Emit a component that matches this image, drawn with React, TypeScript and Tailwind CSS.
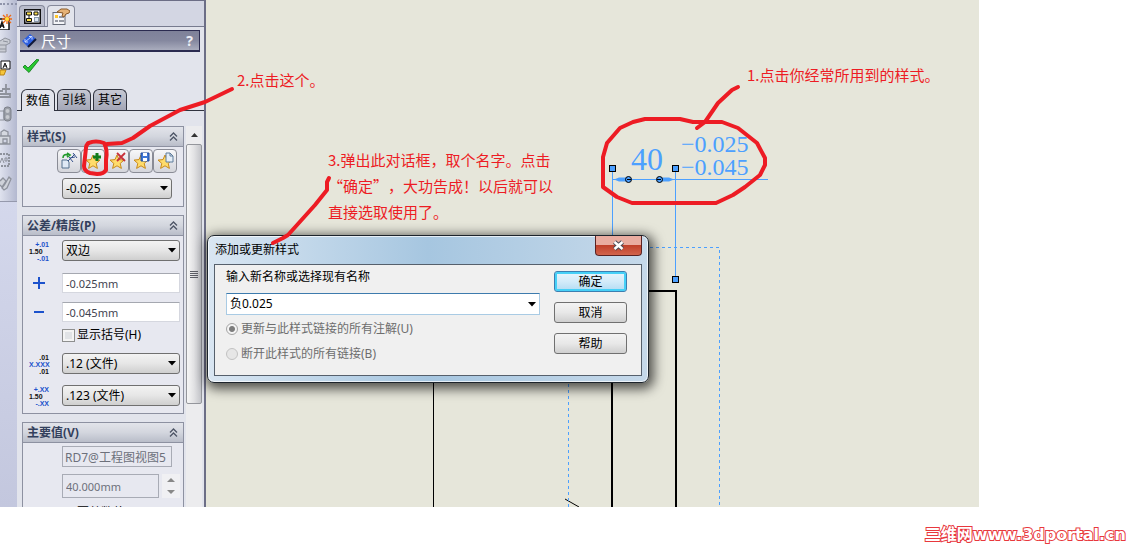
import { useState } from 'react';
import type { ReactNode } from 'react';
import { clsx } from 'clsx';

const STAR = 'M8 2l2 4.6 5 .5-3.8 3.3 1.2 5L8 12.8l-4.4 2.6 1.2-5L1 7.1l5-.5z';

function Star() {
  return <path d={STAR} fill="#ffdc6b" stroke="#c88a1c" strokeWidth="1" />;
}

function Arrow() {
  return (
    <svg width="8" height="5" viewBox="0 0 8 5" className="pointer-events-none">
      <path d="M0 0h8L4 4.5z" fill="#000" />
    </svg>
  );
}

function Chevrons() {
  return (
    <svg width="9" height="9" viewBox="0 0 9 9" fill="none" stroke="#4d5566" strokeWidth="1.3">
      <path d="M1 4.5l3.5-3.5L8 4.5M1 8.5L4.5 5 8 8.5" />
    </svg>
  );
}

function Select({ label, options, className }: { label: string; options: string[]; className?: string }) {
  return (
    <div className={clsx('relative', className)}>
      <select
        aria-label={label}
        className="block h-[21px] w-full appearance-none rounded-[3px] border border-[#707070] bg-linear-to-b from-[#f3f3f3] via-[#e6e6e6] to-[#cfcfcf] pl-[3px] text-[12px] leading-[18px] text-black"
      >
        {options.map((o) => (
          <option key={o}>{o}</option>
        ))}
      </select>
      <span className="pointer-events-none absolute inset-y-0 right-1 flex items-center">
        <Arrow />
      </span>
    </div>
  );
}

function Section({ title, children }: { title: string; children: ReactNode }) {
  return (
    <section className="border border-[#8d91a1] bg-[#e7e8f0]">
      <h2 className="flex h-5 items-center justify-between border-b border-[#8d91a1] bg-linear-to-b from-[#e2e4ea] via-[#d3d6de] to-[#b9bdc9] pl-1 pr-[5px] text-[12px] font-bold text-[#33405c]">
        {title}
        <button type="button" aria-label={`收起 ${title}`}>
          <Chevrons />
        </button>
      </h2>
      {children}
    </section>
  );
}

function Row({ icon, children }: { icon?: ReactNode; children: ReactNode }) {
  return (
    <div className="flex items-center pr-[3px]">
      <div className="flex w-[39px] shrink-0 items-center justify-center pr-2">{icon}</div>
      {children}
    </div>
  );
}

function ToleranceIcon({ top, mid, bottom, blueMid }: { top: string; mid: string; bottom: string; blueMid?: boolean }) {
  return (
    <svg width="20" height="20" viewBox="0 0 20 20" className="overflow-visible font-['Liberation_Sans',sans-serif] text-[7px] font-bold">
      <text x="20" y="6" textAnchor="end" fill={blueMid ? '#111' : '#1c52cc'}>{top}</text>
      <text x="0" y="13" fill={blueMid ? '#1c52cc' : '#111'}>{mid}</text>
      <text x="20" y="20" textAnchor="end" fill={blueMid ? '#111' : '#1c52cc'}>{bottom}</text>
    </svg>
  );
}

const styleButtons = [
  {
    label: '应用默认属性',
    icon: (
      <>
        <path d="M1 7h5l2 2v6H1z" fill="#dfe9f5" stroke="#55718d" />
        <path d="M2 5c0-3 2-4 5-3M6 0l3 2-3 2" fill="none" stroke="#249a2c" strokeWidth="1.6" />
        <path d="M7 8l7-7M8 4l4 5M12 0l4 5M9 5l5-1" fill="none" stroke="#36538c" />
      </>
    ),
  },
  {
    label: '添加或更新样式',
    icon: (
      <>
        <Star />
        <path d="M12 0v8M8 4h8" stroke="#137d1b" strokeWidth="3" />
      </>
    ),
  },
  {
    label: '删除样式',
    icon: (
      <>
        <Star />
        <path d="M8 0l8 8M16 0L8 8" stroke="#c8303a" strokeWidth="1.8" />
      </>
    ),
  },
  {
    label: '保存样式',
    icon: (
      <>
        <Star />
        <path d="M8 0h8v8H8z" fill="#3f76d6" stroke="#234c9c" />
        <path d="M10 0h4v3h-4zM10 5h4v3h-4z" fill="#fff" />
      </>
    ),
  },
  {
    label: '装入样式',
    icon: (
      <>
        <Star />
        <path d="M9 0h4l3 3v6H9z" fill="#e4edf7" stroke="#5f7c9b" />
        <path d="M13 0v3h3" fill="none" stroke="#5f7c9b" />
      </>
    ),
  },
];

const tools = [
  {
    label: '注释',
    icon: (
      <>
        <path d="M0 5h9v11H0" fill="#fff" stroke="#111" strokeWidth="1.5" />
        <path d="M0 14l2-6 2 6M0 12h4" fill="none" stroke="#111" strokeWidth="1.5" />
        <path d="M7 0v10M2 5h10M3 1l8 8M11 1L3 9" stroke="#ef6a16" strokeWidth="1.3" />
        <circle cx="7" cy="5" r="2" fill="#ffe23a" />
      </>
    ),
  },
  {
    label: '线性注释',
    icon: (
      <>
        <path d="M0 4l5-3 5 2v3L6 8v7H0" fill="#c9ccd4" stroke="#8e929c" />
        <path d="M0 8h6M0 12h6M3 4l5 1" stroke="#8e929c" />
      </>
    ),
  },
  {
    label: '格式',
    icon: (
      <>
        <path d="M1 1h9v8H1z" fill="#fff" stroke="#111" />
        <path d="M3 8l2-5 2 5M4 6h3" fill="none" stroke="#111" />
        <path d="M0 10h6l-2 5H0z" fill="#f6c63b" stroke="#b98416" />
      </>
    ),
  },
  {
    label: '基准',
    icon: <path d="M6 1v10M2 6h8M0 11h10v3H0M0 8h3" fill="none" stroke="#8e929c" strokeWidth="1.8" />,
  },
  {
    label: '交通灯',
    icon: (
      <>
        <path d="M0 5h4v9H0" fill="none" stroke="#8e929c" />
        <rect x="4" y="1" width="7" height="14" rx="3" fill="#9a9ea7" stroke="#7d818b" />
        <circle cx="7.5" cy="5" r="2" fill="#c6c9cf" />
        <circle cx="7.5" cy="11" r="2" fill="#c6c9cf" />
      </>
    ),
  },
  {
    label: '形位公差',
    icon: <path d="M0 7h10v8H0M1 7V3l3-2 4 2v4M3 10v4h4v-4z" fill="#d5d8df" stroke="#8e929c" strokeWidth="1.3" />,
  },
  {
    label: '区域',
    icon: (
      <>
        <path d="M0 2h9v12H0" fill="none" stroke="#8e929c" strokeWidth="2" strokeDasharray="2 1" />
        <path d="M0 11l2-5 2 5M5 6h2v3H5z" fill="none" stroke="#8e929c" />
      </>
    ),
  },
  {
    label: '链接',
    icon: (
      <path d="M0 6l3-3 3 3-4 6-2-2M5 9l4-7 2 2-4 9-3 2-2-2z" fill="#cfd2d9" stroke="#8e929c" strokeWidth="1.3" />
    ),
  },
];

function Toolbar() {
  return (
    <aside className="w-[17px] shrink-0 bg-linear-to-b from-[#dfe3f5] to-[#c3c7de]">
      <div className="flex flex-col gap-[7px] border-b border-[#9599ac] bg-linear-to-r from-[#dfe2ee] to-[#b3b8cf] pb-[10px]">
        <div className="h-[5px] border-b-2 border-dotted border-[#8f94aa]" />
        {tools.map((t) => (
          <button key={t.label} type="button" aria-label={t.label} className="h-4 w-3 first-of-type:mt-0.5">
            <svg width="12" height="16" viewBox="0 0 12 16">
              {t.icon}
            </svg>
          </button>
        ))}
      </div>
    </aside>
  );
}

const valueTabs = ['数值', '引线', '其它'];

function PropertyPanel() {
  const [tab, setTab] = useState('数值');

  return (
    <aside className="flex w-[189px] shrink-0 flex-col border-r-2 border-t border-[#6c6e86] bg-[#e2e4ec]">
      {/* manager tabs */}
      <div className="flex h-[26px] shrink-0 items-end gap-0.5 border-b border-[#777b8f] bg-[#d3d6e3] pl-0.5">
        <button type="button" aria-label="特征树" className="flex h-[21px] w-[26px] items-center justify-center rounded-t-[4px] border border-b-0 border-[#85899b] bg-[#b9bccb]">
          <svg width="17" height="15" viewBox="0 0 17 15">
            <rect x="0.75" y="0.75" width="15.5" height="13.5" fill="#fff" stroke="#111" strokeWidth="1.5" />
            <path d="M2.5 3h5v3h-5zM10 3h4v3h-4zM5 6v4M2.5 9.500h5v3h-5z" fill="#ffe14a" stroke="#111" />
            <rect x="10.500" y="8.500" width="4" height="4" fill="#dce6f2" stroke="#8899aa" />
          </svg>
        </button>
        <button type="button" aria-label="属性" className="-mb-px flex h-[22px] w-7 items-center justify-center rounded-t-[4px] border border-b-0 border-[#85899b] bg-[#e2e4ec]">
          <svg width="18" height="17" viewBox="0 0 18 17">
            <rect x="1" y="4.500" width="12" height="12" fill="#f4f5f8" stroke="#666b78" />
            <rect x="3" y="7" width="3" height="3" fill="#ffc52b" />
            <path d="M7 9h5M7 13h5M3 13h3" stroke="#777b86" strokeWidth="1.5" />
            <path d="M5 4l4-3 6 0 3 2-1 2-3 1-2 3-2-1 1-3z" fill="#e5b277" stroke="#8a5a2a" />
          </svg>
        </button>
      </div>

      <div className="ml-[3px] mr-1 mt-[3px] flex h-[22px] shrink-0 items-center border-b-2 border-r border-t border-[#2b2b50] bg-linear-to-b from-[#7e8199] via-[#85889f] to-[#a9acbd] px-0.5">
        <svg width="15" height="15" viewBox="0 0 15 15">
          <path d="M0 8l8-7 6 5-8 8z" fill="#2d5fe0" />
          <path d="M6 14l8-8" stroke="#101838" strokeWidth="2" />
          <path d="M3 9l6-5M3 6v3h3M7 3.500h3v3" fill="none" stroke="#c4d4ff" />
        </svg>
        <h1 className="ml-1 flex-1 text-[15px] leading-[18px] text-white">尺寸</h1>
        <button type="button" className="pr-1 text-[14px] leading-[18px] font-bold text-[#eceef5]">?</button>
      </div>

      <button type="button" aria-label="确定并关闭" className="ml-[6px] mt-[7px] h-[14px] w-4">
        <svg width="16" height="14" viewBox="0 0 16 14">
          <path d="M0 8l2-2 3 3 9-9 2 1L6 13.500z" fill="#27c92f" stroke="#11761a" strokeWidth="0.8" />
        </svg>
      </button>

      <div className="mt-4 flex h-[22px] shrink-0 items-end gap-0.5 border-b border-[#30333f] pl-1" role="tablist">
        {valueTabs.map((t) => (
          <button
            key={t}
            type="button"
            role="tab"
            aria-selected={t === tab}
            onClick={() => setTab(t)}
            className={clsx(
              'w-[34px] rounded-t-[6px] border border-b-0 border-[#30333f] text-[12px] leading-5 text-black',
              t === tab ? '-mb-px h-[22px] bg-[#e2e4ec]' : 'h-[21px] bg-linear-to-b from-[#c7c9d3] to-[#a3a6b6]',
            )}
          >
            {t}
          </button>
        ))}
      </div>

      <div className="mt-[15px] flex min-h-0 flex-1 gap-[2px] overflow-hidden pl-[5px]">
        <div className="flex min-w-0 flex-1 flex-col gap-2">
          <Section title="样式(S)">
            <div className="flex justify-end pr-[6px] pt-[2px]">
              {styleButtons.map((b) => (
                <button
                  key={b.label}
                  type="button"
                  aria-label={b.label}
                  className="flex size-6 items-center justify-center rounded-[4px] border border-[#8a8c96] bg-linear-to-b from-[#f7f7f9] to-[#d4d5db]"
                >
                  <svg width="18" height="18" viewBox="-1 -1 18 18">
                    {b.icon}
                  </svg>
                </button>
              ))}
            </div>
            <div className="pb-[7px] pl-[39px] pr-[11px] pt-[5px]">
              <Select label="样式" options={['-0.025']} />
            </div>
          </Section>

          <Section title="公差/精度(P)">
            <div className="flex flex-col pb-[7px] pt-1">
              <Row icon={<ToleranceIcon top="+.01" mid="1.50" bottom="-.01" />}>
                <Select label="公差类型" options={['双边']} className="flex-1" />
              </Row>
              <div className="mt-3 flex flex-col gap-[9px]">
                <Row
                  icon={
                    <svg width="12" height="12" viewBox="0 0 12 12">
                      <path d="M6 0v12M0 6h12" stroke="#1c52cc" strokeWidth="2" />
                    </svg>
                  }
                >
                  <input aria-label="最大变量" defaultValue="-0.025mm" className="h-5 min-w-0 flex-1 border border-[#d5d7df] border-t-[#a5a8b0] bg-white px-[3px] text-[11px] text-[#3f4350]" />
                </Row>
                <Row
                  icon={
                    <svg width="12" height="12" viewBox="0 0 12 12">
                      <path d="M1 6h10" stroke="#1c52cc" strokeWidth="2" />
                    </svg>
                  }
                >
                  <input aria-label="最小变量" defaultValue="-0.045mm" className="h-5 min-w-0 flex-1 border border-[#d5d7df] border-t-[#a5a8b0] bg-white px-[3px] text-[11px] text-[#3f4350]" />
                </Row>
              </div>
              <label className="ml-[39px] mt-[6px] flex h-[14px] items-center gap-[2px] text-[12px] text-black">
                <input type="checkbox" className="size-[13px] appearance-none border border-[#8e8f8f] bg-[#e1e3e6] outline-2 -outline-offset-3 outline-[#f4f4f4]" />
                显示括号(H)
              </label>
              <div className="mt-[11px] flex flex-col gap-[11px]">
                <Row icon={<ToleranceIcon top=".01" mid="X.XXX" bottom=".01" blueMid />}>
                  <Select label="单位精度" options={['.12 (文件)']} className="flex-1" />
                </Row>
                <Row icon={<ToleranceIcon top="+.XX" mid="1.50" bottom="-.XX" />}>
                  <Select label="公差精度" options={['.123 (文件)']} className="flex-1" />
                </Row>
              </div>
            </div>
          </Section>

          <Section title="主要值(V)">
            <div className="flex flex-col pl-[39px] pr-[3px] pt-[3px]">
              <input aria-label="名称" disabled defaultValue="RD7@工程图视图5" className="mr-2 h-[21px] border border-[#a8abb5] bg-[#e7e8f0] px-0.5 text-[12px] text-[#6d707b]" />
              <div className="mt-[7px] flex gap-[3px]">
                <input aria-label="尺寸值" disabled defaultValue="40.000mm" className="h-6 min-w-0 flex-1 border border-[#a8abb5] bg-[#e7e8f0] px-[3px] text-[11px] text-[#6d707b]" />
                <div className="flex w-[18px] flex-col bg-[#f0f0f3]">
                  <button type="button" aria-label="增大" disabled className="flex flex-1 items-center justify-center">
                    <svg width="8" height="4" viewBox="0 0 8 4"><path d="M4 0l4 4H0z" fill="#888" /></svg>
                  </button>
                  <button type="button" aria-label="减小" disabled className="flex flex-1 items-center justify-center">
                    <svg width="8" height="4" viewBox="0 0 8 4"><path d="M0 0h8L4 4z" fill="#888" /></svg>
                  </button>
                </div>
              </div>
              <label className="mt-2 flex h-[14px] items-center gap-[2px] text-[12px] text-black">
                <input type="checkbox" className="size-[13px] appearance-none border border-[#8e8f8f] bg-[#e1e3e6]" />
                覆盖数值(O)
              </label>
            </div>
          </Section>
        </div>

        {/* scrollbar */}
        <div className="mr-[2px] flex w-[16px] flex-col bg-[#ececee]">
          <div className="flex h-[18px] items-center justify-center">
            <svg width="7" height="4" viewBox="0 0 7 4"><path d="M3.500 0L7 4H0z" fill="#333" /></svg>
          </div>
          <div className="flex h-[260px] flex-col items-center justify-center gap-[1px] rounded-[2px] border border-[#94969c] bg-linear-to-r from-[#f6f6f6] via-[#e2e2e4] to-[#c4c5ca]">
            {[0, 1, 2, 3].map((i) => (
              <span key={i} className="h-px w-2 bg-[#5c5e66]" />
            ))}
          </div>
        </div>
      </div>
    </aside>
  );
}

function Drawing() {
  return (
    <>
      <svg className="absolute inset-0 size-full" fill="none">
        <g stroke="#000">
          <path d="M433.500 380V507M565 499l14 8" />
          <path d="M612 380V507M649 291H676V507" strokeWidth="2" />
        </g>
        <g stroke="#4ca0ff">
          <path d="M568.500 384V507M650 247.500H719.500V507" strokeDasharray="3 3" />
          <path d="M612.500 168V240M675.500 168V280M612 179.500H768" />
        </g>
        <path d="M614 179.500l5-2h10v4h-10zM674 179.500l-5-2h-10v4h10z" fill="#4ca0ff" />
        <g fill="#4ca0ff" stroke="#000">
          <rect x="609.500" y="165.500" width="6" height="6" />
          <rect x="672.500" y="165.500" width="6" height="6" />
          <rect x="672.500" y="276.500" width="6" height="6" />
          <circle cx="628.500" cy="179.500" r="3" />
          <circle cx="659.500" cy="179.500" r="3" />
          <path d="M627 179.500h4M657 179.500h4" />
        </g>
      </svg>
      <div className="absolute left-[631px] top-[133px] flex items-end gap-[18px] text-[#4ca0ff] font-['Liberation_Serif',serif]">
        <span className="text-[32px] leading-[42px]">40</span>
        <p className="pb-px text-[24px] leading-[23px]">
          −0.025
          <br />
          −0.045
        </p>
      </div>
    </>
  );
}

const dialogButton = 'h-[21px] rounded-[3px] border text-[12px] leading-[19px] text-black';

function StyleDialog() {
  const [name, setName] = useState('负0.025');

  return (
    <div
      role="dialog"
      aria-labelledby="dialog-title"
      className="absolute left-[207px] top-[235px] w-[442px] rounded-[7px] border border-[#1d242c] bg-linear-to-r from-[#d9e6f2] via-[#a6c6e0] to-[#c6d9ea] px-[6px] pb-[6px] shadow-[2px_3px_12px_3px_rgba(0,0,0,0.65)] inset-ring inset-ring-white/70"
    >
      <div className="flex h-7 items-start justify-between">
        <h2 id="dialog-title" className="pl-px text-[12px] leading-[27px] text-black">添加或更新样式</h2>
        <button
          type="button"
          aria-label="关闭"
          className="flex h-5 w-[47px] items-center justify-center rounded-b-[4px] border border-t-0 border-[#5a2222] bg-linear-to-b from-[#e9aca0] from-45% via-[#c0402b] via-50% to-[#d2644c]"
        >
          <svg width="13" height="11" viewBox="0 0 13 11">
            <path d="M2.500 2l8 7M10.500 2l-8 7" stroke="#4a4a55" strokeWidth="4.500" />
            <path d="M2.500 2l8 7M10.500 2l-8 7" stroke="#fff" strokeWidth="2.500" />
          </svg>
        </button>
      </div>

      <div className="flex gap-[14px] border border-[#56606c] bg-[#f0f0f0] pb-[13px] pl-[11px] pr-[14px] pt-1">
        <div className="flex flex-1 flex-col">
          <label htmlFor="style-name" className="text-[12px] leading-4 text-black">输入新名称或选择现有名称</label>
          <div className="mt-2 flex h-[22px] items-center border border-[#a9cbe4] border-t-[#3d7bad] bg-white">
            <input
              id="style-name"
              value={name}
              onChange={(e) => setName(e.target.value)}
              className="min-w-0 flex-1 px-[3px] text-[12px] leading-[18px] text-black outline-none"
            />
            <button type="button" aria-label="现有名称" className="flex h-full w-[15px] items-center justify-center">
              <Arrow />
            </button>
          </div>
          <label className="mt-[6px] flex items-center gap-[3px] text-[12px] leading-4 text-[#6d6d6d]">
            <input type="radio" name="link" disabled defaultChecked className="size-[12px] appearance-none rounded-full border border-[#a5a5a5] bg-[radial-gradient(#7d7d7d_35%,#f4f4f4_50%)]" />
            更新与此样式链接的所有注解(U)
          </label>
          <label className="mt-[9px] flex items-center gap-[3px] text-[12px] leading-4 text-[#6d6d6d]">
            <input type="radio" name="link" disabled className="size-[12px] appearance-none rounded-full border border-[#c2c2c2] bg-[#e6e6e6]" />
            断开此样式的所有链接(B)
          </label>
        </div>
        <div className="flex w-[73px] flex-col gap-[10px] pt-0.5">
          <button type="button" className={clsx(dialogButton, 'border-[#3c7fb1] bg-linear-to-b from-[#e9f5fc] via-[#d3ebf9] to-[#b2dbf3] inset-ring-2 inset-ring-[#46d0f7]')}>
            确定
          </button>
          <button type="button" className={clsx(dialogButton, 'border-[#707070] bg-linear-to-b from-[#f3f3f3] via-[#e8e8e8] to-[#cfcfcf]')}>
            取消
          </button>
          <button type="button" className={clsx(dialogButton, 'border-[#707070] bg-linear-to-b from-[#f3f3f3] via-[#e8e8e8] to-[#cfcfcf]')}>
            帮助
          </button>
        </div>
      </div>
    </div>
  );
}

// tutorial notes and hand-drawn red marks lying over the window
function Notes() {
  return (
    <div className="pointer-events-none absolute inset-0 text-[15px] leading-[26px] whitespace-nowrap text-[#ed1c24] font-['Noto_Sans_CJK_SC',sans-serif] [text-spacing-trim:space-all]">
      <p className="absolute left-[747px] top-[62px]">1.点击你经常所用到的样式。</p>
      <p className="absolute left-[237px] top-[67px]">2.点击这个。</p>
      <p className="absolute left-[328px] top-[147px]">
        3.弹出此对话框，取个名字。点击
        <br />
        “确定”，大功告成！以后就可以
        <br />
        直接选取使用了。
      </p>
      <svg className="absolute inset-0 size-full" fill="none" stroke="#ed1c24" strokeWidth="4" strokeLinecap="round" strokeLinejoin="round">
        <path d="M645 119L680 119 693 122 722 122 738 128 757 143 765 158 765 165 760 175 745 187 733 195 716 203 632 203 617 197 603 187 603 157 607 143 620 128 633 122z" />
        <path d="M738 87l-6 3-14 13-13 19-8 6" />
        <path d="M232 89l-27 13-25 8-30 16-17 12-11 5-15 1" />
        <path d="M88 143Q96 140 104 143 108 150 106 160L106 170Q104 174 97 174L90 173Q84 171 84 166L86 148Q86 143 92 142" />
        <path d="M329 178l-2 4v8l-12 15-27 30-5 3-10 5" />
      </svg>
    </div>
  );
}

export default function App() {
  return (
    <div className="flex min-h-screen flex-col bg-white font-['Noto_Sans','Noto_Sans_CJK_SC',sans-serif]" lang="zh-CN">
      <main className="relative mr-[166px] flex h-[calc(100vh-42px)] overflow-hidden bg-[#e6e6da]">
        <Toolbar />
        <PropertyPanel />
        <div className="flex-1">
          <Drawing />
        </div>
        <StyleDialog />
        <Notes />
      </main>
      <footer className="flex flex-1 items-end justify-end pb-1 pr-[19px]">
        <a
          href="#"
          className="text-[16px] leading-5 font-bold text-white font-['DejaVu_Sans','Noto_Sans_CJK_SC',sans-serif] [-webkit-text-stroke:2px_#e8383d] [paint-order:stroke]"
        >
          三维网www.3dportal.cn
        </a>
      </footer>
    </div>
  );
}
